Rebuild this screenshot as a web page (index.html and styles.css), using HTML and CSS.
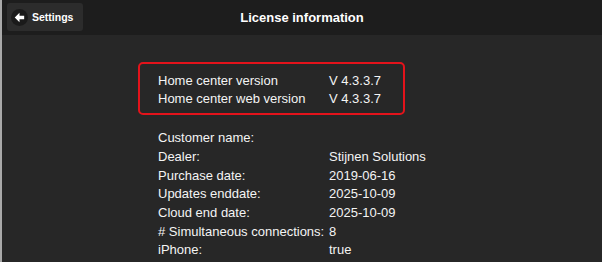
FILE: index.html
```html
<!DOCTYPE html>
<html lang="en">
<head>
  <meta charset="UTF-8" />
  <title>License information</title>
  <link rel="stylesheet" href="styles.css">
</head>
<body>
  <header class="topbar">
    <div class="topbar-left">
      <button class="back-btn">
        <span class="back-icon">
          <svg width="17" height="17" viewBox="0 0 16 16">
            <circle cx="8" cy="8" r="8" fill="#1a1a1a"/>
            <path d="M3.5 8 L8 3.6 L8 6.4 L12.4 6.4 L12.4 9.6 L8 9.6 L8 12.4 Z" fill="#fff"/>
          </svg>
        </span>
        Settings
      </button>
    </div>
    <h1 class="page-title">License information</h1>
    <div class="topbar-right"></div>
  </header>

  <main class="content">
    <div class="version-box">
      <div class="info-row"><span>Home center version</span><span>V 4.3.3.7</span></div>
      <div class="info-row"><span>Home center web version</span><span>V 4.3.3.7</span></div>
    </div>

    <div class="info-list">
      <div class="info-row"><span>Customer name:</span><span></span></div>
      <div class="info-row"><span>Dealer:</span><span>Stijnen Solutions</span></div>
      <div class="info-row"><span>Purchase date:</span><span>2019-06-16</span></div>
      <div class="info-row"><span>Updates enddate:</span><span>2025-10-09</span></div>
      <div class="info-row"><span>Cloud end date:</span><span>2025-10-09</span></div>
      <div class="info-row"><span># Simultaneous connections:</span><span>8</span></div>
      <div class="info-row"><span>iPhone:</span><span>true</span></div>
    </div>
  </main>
</body>
</html>
```

FILE: styles.css
```css
:root {
  --bg: #272727;
  --bar: #1d1d1d;
  --btn: #2c2c2c;
  --text: #f4f4f4;
  --accent: #e3131b;
}
* { box-sizing: border-box; }
html, body {
  height: 100%;
}
body {
  margin: 0;
  font-family: "Liberation Sans", Arial, sans-serif;
  background: var(--bg);
  color: var(--text);
  border-left: 2px solid #a9a9a9;
  overflow: hidden;
}
.topbar {
  height: 35px;
  background: var(--bar);
  display: grid;
  grid-template-columns: 1fr auto 1fr;
  align-items: center;
}
.topbar-left {
  padding-left: 5px;
}
.back-btn {
  display: flex;
  align-items: center;
  gap: 4px;
  height: 28px;
  width: 76px;
  margin-top: -1px;
  padding: 0 0 0 4px;
  border: none;
  border-radius: 3px;
  background: var(--btn);
  color: #fff;
  font-family: inherit;
  font-size: 10.5px;
  font-weight: bold;
  cursor: pointer;
}
.back-icon {
  display: flex;
}
.page-title {
  margin: 0;
  font-size: 13px;
  font-weight: bold;
  color: #fff;
}
.content {
  padding-top: 27px;
}
.info-row {
  display: grid;
  grid-template-columns: 171px auto;
  font-size: 13px;
  line-height: 18.7px;
  white-space: nowrap;
}
.version-box {
  margin-left: 136px;
  width: 267px;
  border: 2px solid var(--accent);
  border-radius: 5px;
  padding: 7.7px 0 4px 18px;
}
.info-list {
  margin-left: 156px;
  margin-top: 14px;
}
```
